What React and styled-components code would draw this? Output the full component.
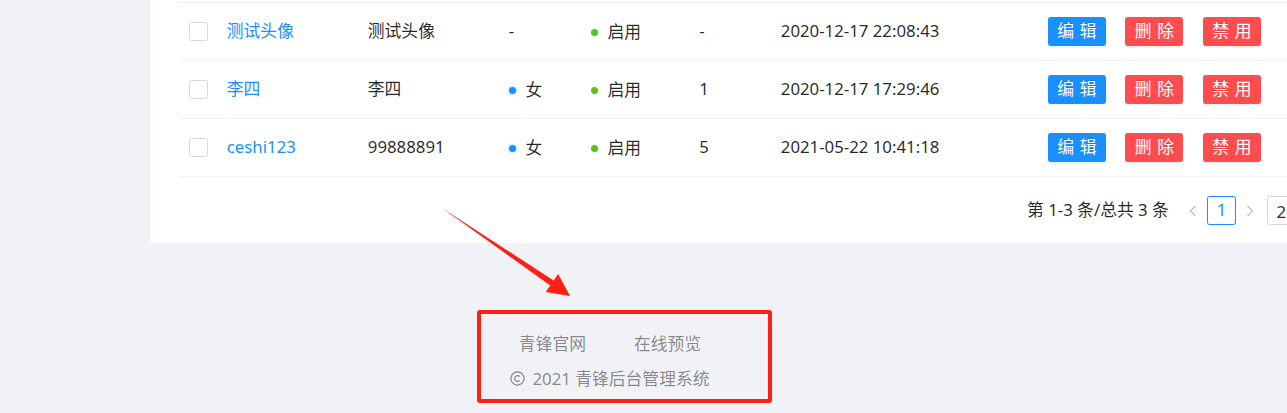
import React from "react";
import styled, { createGlobalStyle } from "styled-components";

const GlobalStyle = createGlobalStyle`
  html, body {
    margin: 0;
    padding: 0;
    overflow: hidden;
    background: #f0f2f5;
  }
  body {
    font-family: "Noto Sans", "Noto Sans CJK SC", sans-serif;
    font-size: 16.8px;
    color: rgba(0, 0, 0, 0.85);
  }
`;

const Page = styled.div`
  position: relative;
  width: 1287px;
  height: 413px;
  overflow: hidden;
`;

const Card = styled.div`
  margin-left: 150px;
  width: 1242px;
  box-sizing: border-box;
  background: #fff;
  padding: 2px 28.8px 18px;
`;

const TableBody = styled.div`
  border-top: 1px solid #f0f0f0;
`;

const Row = styled.div`
  display: grid;
  grid-template-columns: 38px 141px 141px 82px 108.5px 81.5px 267px auto;
  align-items: center;
  height: 57px;
  padding-left: 10px;
  border-bottom: 1px solid #f0f0f0;
  line-height: 1.5715;
`;

const Checkbox = styled.span`
  display: block;
  width: 19.2px;
  height: 19.2px;
  box-sizing: border-box;
  border: 1px solid #d9d9d9;
  border-radius: 2.4px;
  background: #fff;
`;

const NameLink = styled.a`
  color: #1890ff;
  text-decoration: none;
`;

const Cell = styled.span`
  white-space: nowrap;
`;

const Badge = styled.span`
  display: inline-flex;
  align-items: center;
`;

const Dot = styled.span`
  display: inline-block;
  width: 7.2px;
  height: 7.2px;
  border-radius: 50%;
  background: ${(p) => p.$color};
  box-shadow: ${(p) => (p.$ring ? `0 0 0 2px rgba(24,144,255,0.12)` : "none")};
  margin-right: 9.6px;
`;

const Actions = styled.div`
  display: flex;
  gap: 19.5px;
`;

const Button = styled.button`
  flex: none;
  height: 28.8px;
  padding: 0 8.4px;
  box-sizing: border-box;
  white-space: nowrap;
  font-family: inherit;
  font-size: 16.8px;
  line-height: 26.4px;
  color: #fff;
  background: ${(p) => p.$bg};
  border: 1px solid ${(p) => p.$bg};
  border-radius: 2.4px;
  box-shadow: 0 2px 0 rgba(0, 0, 0, 0.045);
  text-shadow: 0 -1px 0 rgba(0, 0, 0, 0.12);
  cursor: pointer;
  & > span {
    letter-spacing: 0.34em;
    margin-right: -0.34em;
  }
`;

const Pagination = styled.div`
  display: flex;
  justify-content: flex-end;
  align-items: center;
  margin-top: 19.2px;
  height: 28.8px;
`;

const Total = styled.span`
  margin-right: 9.6px;
  line-height: 28.8px;
  white-space: nowrap;
`;

const NavItem = styled.span`
  width: 28.8px;
  height: 28.8px;
  display: flex;
  align-items: center;
  justify-content: center;
  color: rgba(0, 0, 0, 0.25);
`;

const PageItem = styled.span`
  min-width: 28.8px;
  height: 28.8px;
  box-sizing: border-box;
  border: 1px solid ${(p) => (p.$active ? "#1890ff" : "#d9d9d9")};
  color: ${(p) => (p.$active ? "#1890ff" : "rgba(0,0,0,0.85)")};
  border-radius: 2.4px;
  text-align: center;
  line-height: 26.8px;
`;

const SizeSelect = styled.span`
  margin-left: 2.4px;
  width: 96px;
  height: 28.8px;
  box-sizing: border-box;
  border: 1px solid #d9d9d9;
  border-radius: 2.4px;
  padding: 0 8.4px;
  display: flex;
  align-items: center;
  justify-content: space-between;
  white-space: nowrap;
  & svg {
    color: rgba(0, 0, 0, 0.25);
  }
`;

const Footer = styled.footer`
  width: 1220px;
  padding-top: 87.8px;
  color: rgba(0, 0, 0, 0.45);
  text-align: center;
`;

const Links = styled.div`
  display: flex;
  justify-content: center;
  gap: 48px;
  line-height: 26.4px;
  margin-bottom: 8.6px;
`;

const FooterLink = styled.a`
  color: rgba(0, 0, 0, 0.45);
  text-decoration: none;
`;

const Copyright = styled.div`
  display: flex;
  justify-content: center;
  align-items: center;
  line-height: 26.4px;
  & svg {
    margin-right: 7px;
  }
`;

const RedBox = styled.div`
  position: absolute;
  left: 477px;
  top: 310px;
  width: 295px;
  height: 93px;
  box-sizing: border-box;
  border: 4px solid #ff1f14;
  border-radius: 3px;
  pointer-events: none;
`;

const ArrowLayer = styled.svg`
  position: absolute;
  left: 0;
  top: 0;
  pointer-events: none;
`;

const Chevron = ({ dir }) => (
  <svg width="8" height="12" viewBox="0 0 8 12">
    <polyline
      points={dir === "left" ? "6.5,1 1.5,6 6.5,11" : "1.5,1 6.5,6 1.5,11"}
      fill="none"
      stroke="currentColor"
      strokeWidth="1.3"
    />
  </svg>
);

const DownArrow = () => (
  <svg width="12" height="8" viewBox="0 0 12 8">
    <polyline points="1,1.5 6,6.5 11,1.5" fill="none" stroke="currentColor" strokeWidth="1.3" />
  </svg>
);

const CopyrightIcon = () => (
  <svg width="15" height="15" viewBox="0 0 15 15">
    <circle cx="7.5" cy="7.5" r="6.6" fill="none" stroke="currentColor" strokeWidth="1.2" />
    <path d="M9.8 5.6 A2.9 2.9 0 1 0 9.8 9.4" fill="none" stroke="currentColor" strokeWidth="1.2" />
  </svg>
);

const rows = [
  { name: "测试头像", nick: "测试头像", gender: null, status: "启用", num: "-", date: "2020-12-17 22:08:43" },
  { name: "李四", nick: "李四", gender: "女", status: "启用", num: "1", date: "2020-12-17 17:29:46" },
  { name: "ceshi123", nick: "99888891", gender: "女", status: "启用", num: "5", date: "2021-05-22 10:41:18" },
];

export default function App() {
  return (
    <Page>
      <GlobalStyle />
      <Card>
        <TableBody>
          {rows.map((r) => (
            <Row key={r.name}>
              <Checkbox />
              <Cell>
                <NameLink href="#">{r.name}</NameLink>
              </Cell>
              <Cell>{r.nick}</Cell>
              <Cell>
                {r.gender ? (
                  <Badge>
                    <Dot $color="#1890ff" $ring />
                    {r.gender}
                  </Badge>
                ) : (
                  "-"
                )}
              </Cell>
              <Cell>
                <Badge>
                  <Dot $color="#52c41a" />
                  {r.status}
                </Badge>
              </Cell>
              <Cell>{r.num}</Cell>
              <Cell>{r.date}</Cell>
              <Actions>
                <Button $bg="#1890ff">
                  <span>编辑</span>
                </Button>
                <Button $bg="#ff4d4f">
                  <span>删除</span>
                </Button>
                <Button $bg="#ff4d4f">
                  <span>禁用</span>
                </Button>
              </Actions>
            </Row>
          ))}
        </TableBody>
        <Pagination>
          <Total>第 1-3 条/总共 3 条</Total>
          <NavItem>
            <Chevron dir="left" />
          </NavItem>
          <PageItem $active>1</PageItem>
          <NavItem>
            <Chevron dir="right" />
          </NavItem>
          <SizeSelect>
            20 条/页
            <DownArrow />
          </SizeSelect>
        </Pagination>
      </Card>
      <Footer>
        <Links>
          <FooterLink href="#">青锋官网</FooterLink>
          <FooterLink href="#">在线预览</FooterLink>
        </Links>
        <Copyright>
          <CopyrightIcon />
          2021 青锋后台管理系统
        </Copyright>
      </Footer>
      <RedBox />
      <ArrowLayer width="1287" height="413" viewBox="0 0 1287 413">
        <polygon
          points="442,208 553.7,280.5 558.2,273.9 570,296 545.8,292.1 550.3,285.5"
          fill="#ff1f14"
        />
      </ArrowLayer>
    </Page>
  );
}
